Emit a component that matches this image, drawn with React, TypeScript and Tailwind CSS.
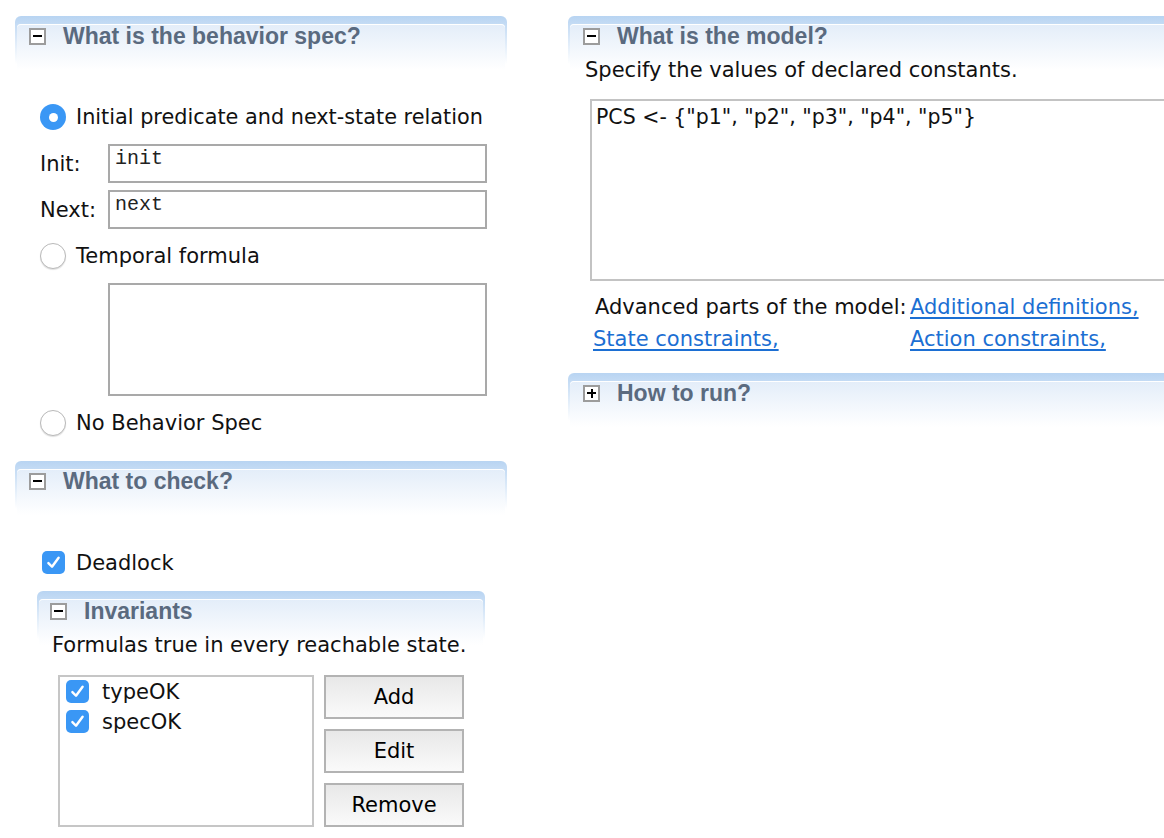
import type { ReactNode } from 'react'

function Toggle({ open = true }: { open?: boolean }) {
  return (
    <span className="relative inline-flex w-[17px] h-[17px] shrink-0 items-center justify-center border-2 border-[#9c9c9c] bg-white">
      <span className="w-[9px] h-[2px] bg-black" />
      {!open && <span className="absolute w-[2px] h-[9px] bg-black" />}
    </span>
  )
}

function Section({
  title,
  open = true,
  className = '',
  headerPad = 'pl-[12px]',
  children,
}: {
  title: string
  open?: boolean
  className?: string
  headerPad?: string
  children?: ReactNode
}) {
  return (
    <div
      className={`rounded-t-[6px] px-[2px] pt-[2px] bg-[linear-gradient(to_bottom,#b8d4f2,#ffffff_48px)] ${className}`}
    >
      <div className="min-h-[46px] rounded-t-[4px] shadow-[inset_0_1px_0_#ffffff] bg-[linear-gradient(to_bottom,#e3edf9,#ffffff_46px)]">
        <div className={`flex items-center h-[24px] mt-[6px] gap-[17px] ${headerPad}`}>
          <Toggle open={open} />
          <span className="font-['Liberation_Sans',Arial,sans-serif] text-[23px] leading-[24px] font-bold text-[#5a6a7f]">
            {title}
          </span>
        </div>
        {children}
      </div>
    </div>
  )
}

function Radio({ checked = false }: { checked?: boolean }) {
  if (checked) {
    return (
      <span className="flex w-[26px] h-[26px] shrink-0 items-center justify-center rounded-full bg-[#3a97f5]">
        <span className="w-[9px] h-[9px] rounded-full bg-white" />
      </span>
    )
  }
  return (
    <span className="w-[26px] h-[26px] shrink-0 rounded-full border border-[#b9b9b9] bg-white shadow-[0_1px_1px_rgba(0,0,0,0.12)]" />
  )
}

function Check({ size = 23 }: { size?: number }) {
  return (
    <span
      className="flex shrink-0 items-center justify-center rounded-[5px] bg-[#3a97f5]"
      style={{ width: size, height: size }}
    >
      <svg width="17" height="17" viewBox="0 0 16 16" fill="none">
        <path d="M3.2 8.6 L6.6 12 L12.8 3.6" stroke="white" strokeWidth="2.3" strokeLinecap="round" strokeLinejoin="round" />
      </svg>
    </span>
  )
}

function Field({ value }: { value: string }) {
  return (
    <div className="w-[379px] h-[39px] border-2 border-[#a9a9a9] bg-white px-[5px] pt-[1px] font-['Liberation_Mono',monospace] text-[20px] leading-[24px] text-[#222]">
      {value}
    </div>
  )
}

function Button({ label }: { label: string }) {
  return (
    <button className="w-[140px] h-[44px] border-2 border-[#b3b3b3] bg-[linear-gradient(to_bottom,#e8e8e8,#fafafa)] text-[21px] text-black">
      {label}
    </button>
  )
}

export default function App() {
  return (
    <div className="w-[1164px] h-[838px] overflow-hidden bg-white font-['DejaVu_Sans',sans-serif] text-[21px] leading-[24px] text-[#111]">
      <div className="flex pt-[16px] pl-[15px] gap-[61px]">
        {/* left column */}
        <div className="w-[492px] shrink-0 flex flex-col">
          <Section title="What is the behavior spec?">
            <div className="flex flex-col pl-[23px] pb-[1px]">
              <div className="flex items-center gap-[10px] mt-[56px] h-[26px]">
                <Radio checked />
                <span className="text-[20.8px]">Initial predicate and next-state relation</span>
              </div>
              <div className="flex items-center mt-[14px]">
                <span className="w-[68px]">Init:</span>
                <Field value="init" />
              </div>
              <div className="flex items-center mt-[7px]">
                <span className="w-[68px]">Next:</span>
                <Field value="next" />
              </div>
              <div className="flex items-center gap-[10px] mt-[14px] h-[26px]">
                <Radio />
                <span>Temporal formula</span>
              </div>
              <div className="ml-[68px] mt-[14px] w-[379px] h-[113px] border-2 border-[#a9a9a9] bg-white" />
              <div className="flex items-center gap-[10px] mt-[14px] h-[26px]">
                <Radio />
                <span>No Behavior Spec</span>
              </div>
            </div>
          </Section>

          <Section title="What to check?" className="mt-[24px]">
            <div className="flex flex-col pl-[25px]">
              <div className="flex items-center gap-[11px] mt-[58px] h-[23px]">
                <Check />
                <span>Deadlock</span>
              </div>
            </div>
            <Section title="Invariants" className="mt-[17px] ml-[20px] w-[448px]" headerPad="pl-[11px]">
              <div className="pl-[13px] mt-[10px]">Formulas true in every reachable state.</div>
              <div className="flex gap-[10px] pl-[19px] mt-[18px]">
                <div className="w-[256px] h-[152px] border-2 border-[#c6c6c6] bg-white pl-[6px] pt-[3px] flex flex-col gap-[7px]">
                  <div className="flex items-center gap-[13px] h-[23px]">
                    <Check size={23} />
                    <span>typeOK</span>
                  </div>
                  <div className="flex items-center gap-[13px] h-[23px]">
                    <Check size={23} />
                    <span>specOK</span>
                  </div>
                </div>
                <div className="flex flex-col gap-[10px]">
                  <Button label="Add" />
                  <Button label="Edit" />
                  <Button label="Remove" />
                </div>
              </div>
            </Section>
          </Section>
        </div>

        {/* right column */}
        <div className="w-[640px] shrink-0 flex flex-col">
          <Section title="What is the model?" headerPad="pl-[13px]">
            <div className="pl-[15px] mt-[10px]">Specify the values of declared constants.</div>
            <div className="ml-[20px] mt-[17px] w-[620px] h-[182px] border-2 border-[#c3c3c3] bg-white px-[4px] pt-[4px] text-[20.5px]">
              {'PCS <- {"p1", "p2", "p3", "p4", "p5"}'}
            </div>
            <div className="grid grid-cols-[317px_auto] gap-y-[8px] pl-[23px] mt-[14px]">
              <span className="pl-[2px]">Advanced parts of the model:</span>
              <a href="#" className="text-[#1c6fd3] underline decoration-2 underline-offset-[3px] justify-self-start">
                Additional definitions,
              </a>
              <a href="#" className="text-[#1c6fd3] underline decoration-2 underline-offset-[3px] justify-self-start">
                State constraints,
              </a>
              <a href="#" className="text-[#1c6fd3] underline decoration-2 underline-offset-[3px] justify-self-start">
                Action constraints,
              </a>
            </div>
          </Section>

          <Section title="How to run?" open={false} headerPad="pl-[13px]" className="mt-[22px]" />
        </div>
      </div>
    </div>
  )
}
